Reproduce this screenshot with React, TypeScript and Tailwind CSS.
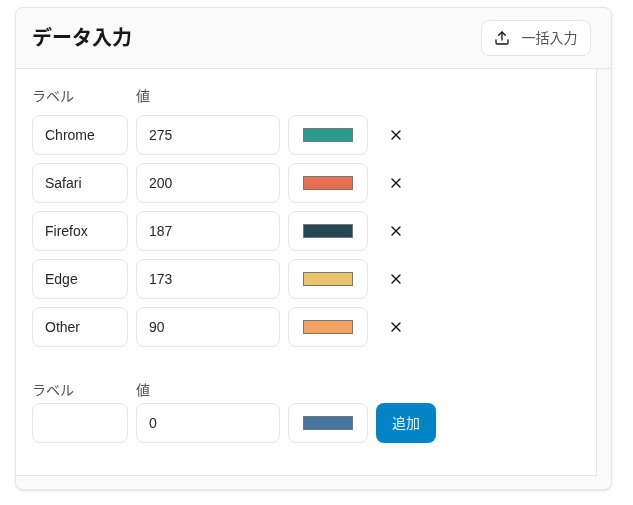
import { Upload, X } from "lucide-react";

const rows = [
  ["Chrome", "275", "#2a9d8f"],
  ["Safari", "200", "#e76f51"],
  ["Firefox", "187", "#264653"],
  ["Edge", "173", "#e9c46a"],
  ["Other", "90", "#f4a261"],
];

function Field({ children, className }: { children?: React.ReactNode; className: string }) {
  return (
    <div className={`h-10 flex items-center border border-[#e5e5e5] rounded-lg bg-white text-sm text-[#262626] px-3 ${className}`}>
      {children}
    </div>
  );
}

function Swatch({ color }: { color: string }) {
  return (
    <div className="h-10 w-20 flex items-center justify-center border border-[#e5e5e5] rounded-lg bg-white">
      <div className="w-[50px] h-[14px] border border-[#767676]" style={{ backgroundColor: color }} />
    </div>
  );
}

function Labels() {
  return (
    <div className="flex gap-2 text-sm text-[#525252] leading-5">
      <div className="w-24">ラベル</div>
      <div className="w-36">値</div>
    </div>
  );
}

export default function App() {
  return (
    <div className="w-[633px] h-[505px] bg-white pl-[15px] pt-[7px] font-['Liberation_Sans','Noto_Sans_CJK_JP',sans-serif] antialiased">
      <div className="w-[597px] h-[483px] flex flex-col border border-[#e5e5e5] rounded-lg bg-[#fafafa] shadow-sm overflow-hidden will-change-transform">
        <div className="h-[61px] shrink-0 flex items-center justify-between border-b border-[#e5e5e5] pl-4 pr-5">
          <h2 className="text-xl font-semibold text-[#171717]">データ入力</h2>
          <button className="h-9 w-[110px] flex items-center justify-center gap-3 border border-[#e5e5e5] rounded-lg bg-white text-sm text-[#525252]">
            <Upload size={16} strokeWidth={2} className="text-[#171717] -ml-px" />
            <span>一括入力</span>
          </button>
        </div>
        <div className="flex-1 flex flex-col min-h-0">
          <div className="flex-1 flex min-h-0">
            <div className="flex-1 bg-white border-r border-b border-[#e5e5e5] px-4 pt-[17px]">
              <Labels />
              <div className="mt-[9px] flex flex-col gap-2">
                {rows.map(([name, value, color]) => (
                  <div key={name} className="flex gap-2">
                    <Field className="w-24">{name}</Field>
                    <Field className="w-36">{value}</Field>
                    <Swatch color={color} />
                    <button className="w-10 h-10 flex items-center justify-center text-[#171717]">
                      <X size={16} strokeWidth={2} />
                    </button>
                  </div>
                ))}
              </div>
              <div className="mt-[33px]">
                <Labels />
              </div>
              <div className="mt-[3px] flex gap-2">
                <Field className="w-24" />
                <Field className="w-36">0</Field>
                <Swatch color="#4575a0" />
                <button className="w-[60px] h-10 rounded-lg bg-[#0284c7] text-sm text-[#e0f2fe]">追加</button>
              </div>
            </div>
            <div className="w-[14px] shrink-0" />
          </div>
          <div className="h-[13px] shrink-0" />
        </div>
      </div>
    </div>
  );
}
